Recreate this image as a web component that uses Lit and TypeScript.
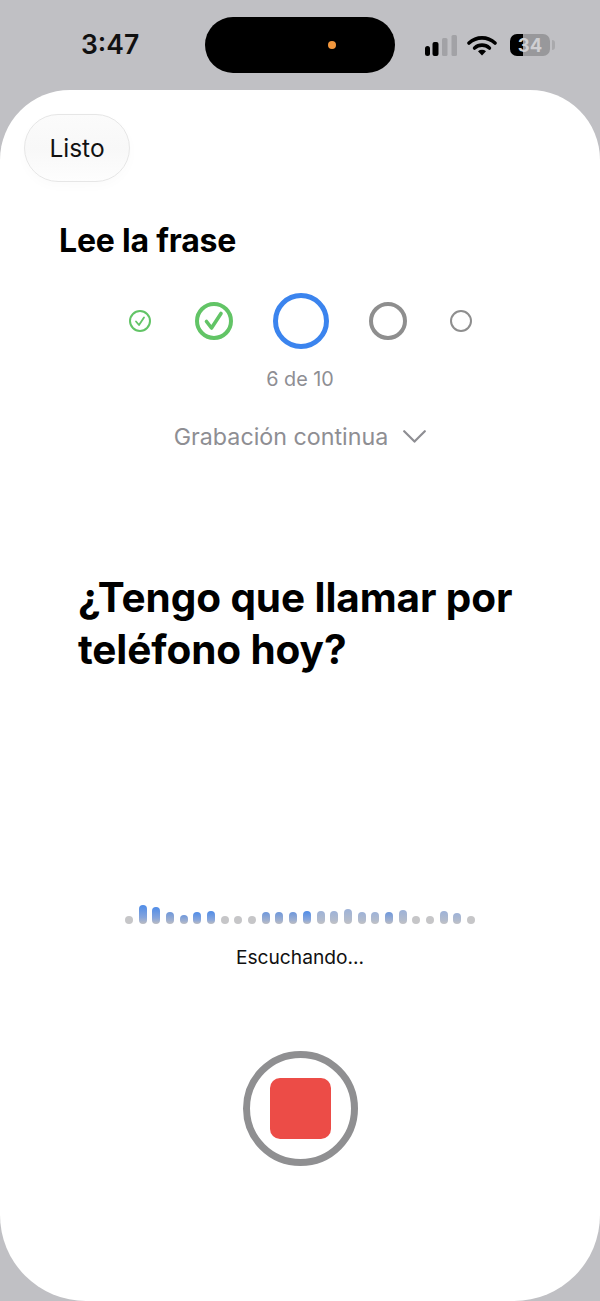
import { LitElement, html, css, svg } from "lit";
import { customElement } from "lit/decorators.js";

type Bar = [number, string];
const BARS: Bar[] = [
  [8, "g"], [19, "b"], [17, "b"], [12, "m"], [9, "m"], [12, "b"], [13, "b"],
  [8, "g"], [8, "g"], [8, "g"], [12, "m"], [12, "m"], [12, "m"], [13, "b"],
  [13, "s"], [13, "s"], [15, "s"], [12, "s"], [12, "s"], [12, "m"], [14, "s"],
  [8, "g"], [8, "g"], [13, "s"], [11, "s"], [8, "g"],
];

const ring = (size: number, stroke: number, color: string, check: string | null, checkW = 0) => html`
  <svg class="ring" width=${size} height=${size} viewBox="0 0 ${size} ${size}" fill="none">
    <circle cx=${size / 2} cy=${size / 2} r=${(size - stroke) / 2} stroke=${color} stroke-width=${stroke}></circle>
    ${check ? svg`<path d=${check} stroke=${color} stroke-width=${checkW} stroke-linecap="round" stroke-linejoin="round"></path>` : ""}
  </svg>`;

@customElement("app-root")
export class AppRoot extends LitElement {
  static styles = css`
    :host {
      display: block;
      width: 600px;
      height: 1301px;
      overflow: hidden;
      background: #c0c0c4;
      font-family: Inter, "Liberation Sans", sans-serif;
      color: #000;
    }
    .status {
      height: 90px;
      display: grid;
      grid-template-columns: 205px 190px 205px;
      box-sizing: border-box;
      padding-top: 17px;
    }
    .time {
      font-size: 26.5px;
      font-weight: 600;
      line-height: 54px;
      padding-left: 81px;
      color: #111;
    }
    .island {
      height: 56px;
      border-radius: 28px;
      background: #000;
      display: flex;
      align-items: center;
      justify-content: flex-end;
      padding-right: 59px;
    }
    .cam {
      width: 8px;
      height: 8px;
      border-radius: 50%;
      background: #f2973d;
    }
    .icons {
      display: flex;
      align-items: flex-start;
      padding: 17px 0 0 30px;
    }
    .signal { margin-right: 11px; }
    .wifi { margin: 1px 13px 0 -1px; }
    .battery {
      width: 40px;
      height: 22px;
      border-radius: 7px;
      background: linear-gradient(90deg, #000 0, #000 13px, #98989b 13px, #98989b 100%);
      color: #cfcfd2;
      font-size: 18.5px;
      font-weight: 700;
      line-height: 22px;
      text-align: center;
    }
    .nub {
      width: 3px;
      height: 10px;
      margin: 6px 0 0 2px;
      background: #a9a9ac;
      border-radius: 0 3px 3px 0;
    }
    .sheet {
      height: 1211px;
      box-sizing: border-box;
      background: #fff;
      border-radius: 70px 70px 86px 86px;
      padding-top: 24px;
      display: flex;
      flex-direction: column;
      align-items: stretch;
    }
    .done {
      align-self: flex-start;
      box-sizing: border-box;
      width: 106px;
      height: 68px;
      margin-left: 24px;
      border-radius: 34px;
      border: 1px solid #e6e6e6;
      background: linear-gradient(180deg, #fbfbfb 0%, #f8f8f8 50%, #fdfdfd 100%);
      box-shadow: 0 4px 12px rgba(0, 0, 0, 0.02);
      font: inherit;
      font-size: 24.5px;
      color: #111;
      padding: 0;
    }
    .title {
      margin: 38px 0 0 59px;
      font-size: 32px;
      font-weight: 700;
      line-height: 42px;
      letter-spacing: -0.2px;
    }
    .steps {
      margin-top: 31px;
      display: flex;
      justify-content: center;
      align-items: center;
      gap: 40px;
      height: 56px;
      padding-left: 1px;
    }
    .ring { display: block; flex: none; }
    .edge { margin: 0 3.5px; }
    .count {
      margin-top: 18px;
      text-align: center;
      font-size: 19.8px;
      line-height: 24px;
      color: #8e8e93;
    }
    .mode {
      margin-top: 29px;
      height: 32px;
      display: flex;
      justify-content: center;
      align-items: center;
      gap: 15px;
      font-size: 23.25px;
      color: #8e8e93;
    }
    .phrase {
      margin: 120px 0 0 78px;
      width: 480px;
      font-size: 40.5px;
      font-weight: 700;
      line-height: 52px;
      letter-spacing: -0.1px;
    }
    .wave {
      margin-top: 228px;
      height: 20px;
      display: flex;
      justify-content: center;
      align-items: flex-end;
      gap: 5.7px;
    }
    .bar { width: 8px; border-radius: 4px; flex: none; }
    .bar.g { background: #c6c6c8; }
    .bar.b { background: linear-gradient(180deg, #4f8ce8 0%, #86a5dc 65%, #bcbcc0 100%); }
    .bar.m { background: linear-gradient(180deg, #6d97dc 0%, #a0b0cf 70%, #bdbdc2 100%); }
    .bar.s { background: linear-gradient(180deg, #9db2d8 0%, #b2bbcc 70%, #c2c2c5 100%); }
    .listening {
      margin-top: 20px;
      text-align: center;
      font-size: 19.2px;
      line-height: 26px;
      color: #111;
    }
    .stop-wrap {
      margin-top: 81px;
      display: flex;
      justify-content: center;
    }
    .stop {
      box-sizing: border-box;
      width: 115px;
      height: 115px;
      border-radius: 50%;
      border: 7px solid #8f8f91;
      background: #fff;
      padding: 0;
      display: flex;
      align-items: center;
      justify-content: center;
    }
    .square {
      width: 61px;
      height: 61px;
      border-radius: 10px;
      background: #ec4c47;
    }
  `;

  render() {
    return html`
      <div class="status">
        <div class="time">3:47</div>
        <div class="island"><span class="cam"></span></div>
        <div class="icons">
          <svg class="signal" width="32" height="22" viewBox="0 0 32 22">
            <rect x="0" y="12" width="5" height="10" rx="2.5" fill="#000"></rect>
            <rect x="7.5" y="8" width="6" height="14" rx="2" fill="#000"></rect>
            <rect x="17" y="4" width="5.5" height="18" rx="1.5" fill="#a2a2a6"></rect>
            <rect x="26.5" y="1" width="5.5" height="21" rx="1.5" fill="#a2a2a6"></rect>
          </svg>
          <svg class="wifi" width="30" height="21" viewBox="0 0 30 21" fill="none">
            <path d="M2 8 C9.5 1.2 20.5 1.2 28 8" stroke="#000" stroke-width="3.6" stroke-linecap="round"></path>
            <path d="M7.6 13 C12 9.2 18 9.2 22.4 13" stroke="#000" stroke-width="3.6" stroke-linecap="round"></path>
            <path d="M11 16.2 C13.5 14.4 16.5 14.4 19 16.2 L15 20.4 Z" fill="#000"></path>
          </svg>
          <div class="battery">34</div>
          <div class="nub"></div>
        </div>
      </div>
      <main class="sheet">
        <button class="done">Listo</button>
        <h1 class="title">Lee la frase</h1>
        <div class="steps">
          <span class="edge">${ring(22, 2, "#62c466", "M7 11.5 L10 15 L15 7.5", 1.8)}</span>
          ${ring(38, 4, "#62c466", "M11.5 19.5 L16.5 26 L26 11.5", 3.6)}
          ${ring(56, 5, "#3b84ee", null)}
          ${ring(38, 4, "#8e8e8e", null)}
          <span class="edge">${ring(22, 2, "#8e8e8e", null)}</span>
        </div>
        <div class="count">6 de 10</div>
        <div class="mode">
          <span>Grabación continua</span>
          <svg width="23" height="13" viewBox="0 0 23 13" fill="none">
            <path d="M1.2 1.2 L11.5 11.6 L21.8 1.2" stroke="#8e8e93" stroke-width="2.2" stroke-linecap="round" stroke-linejoin="round"></path>
          </svg>
        </div>
        <p class="phrase">¿Tengo que llamar por teléfono hoy?</p>
        <div class="wave">
          ${BARS.map(([h, tone]) => html`<span class="bar ${tone}" style="height:${h}px"></span>`)}
        </div>
        <div class="listening">Escuchando...</div>
        <div class="stop-wrap">
          <button class="stop" aria-label="Detener"><span class="square"></span></button>
        </div>
      </main>
    `;
  }
}
